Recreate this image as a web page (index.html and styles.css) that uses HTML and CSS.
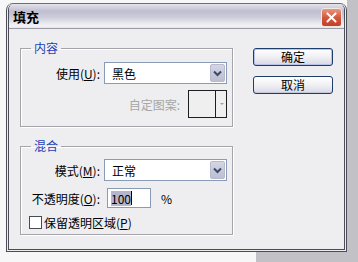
FILE: index.html
```html
<!DOCTYPE html>
<html lang="zh-CN">

<head>
    <meta charset="UTF-8">
    <title>填充</title>
    <link rel="stylesheet" href="styles.css">
</head>

<body>
    <div class="dialog">
        <div class="titlebar">
            <span class="title">填充</span>
            <span class="close">
                <svg width="21" height="19" viewBox="0 0 21 19">
                    <path d="M6 5 L15 14 M15 5 L6 14" stroke="#fff" stroke-width="2.2" stroke-linecap="round" />
                </svg>
            </span>
        </div>

        <div class="client">
            <div class="groups">
                <!-- 内容 -->
                <fieldset class="group">
                    <legend>内容</legend>
                    <div class="row">
                        <span class="lbl">使用(<u>U</u>):</span>
                        <div class="combo">
                            <span class="combo-text">黑色</span>
                            <span class="combo-btn">
                                <svg width="9" height="7" viewBox="0 0 9 7">
                                    <path d="M1 1.5 L4.5 5 L8 1.5" fill="none" stroke="#3a4a6a" stroke-width="2" />
                                </svg>
                            </span>
                        </div>
                    </div>
                    <div class="row row-pattern">
                        <span class="lbl-off">自定图案:</span>
                        <div class="pattern">
                            <span class="pattern-swatch"></span>
                            <span class="pattern-btn"></span>
                        </div>
                    </div>
                </fieldset>

                <!-- 混合 -->
                <fieldset class="group group-blend">
                    <legend>混合</legend>
                    <div class="row">
                        <span class="lbl">模式(<u>M</u>):</span>
                        <div class="combo">
                            <span class="combo-text">正常</span>
                            <span class="combo-btn">
                                <svg width="9" height="7" viewBox="0 0 9 7">
                                    <path d="M1 1.5 L4.5 5 L8 1.5" fill="none" stroke="#3a4a6a" stroke-width="2" />
                                </svg>
                            </span>
                        </div>
                    </div>
                    <div class="row row-opacity">
                        <span class="lbl">不透明度(<u>O</u>):</span>
                        <div class="textbox"><span class="sel">100</span><span class="caret"></span></div>
                        <span class="unit">%</span>
                    </div>
                    <div class="row row-check">
                        <span class="check"></span>
                        <span>保留透明区域(<u>P</u>)</span>
                    </div>
                </fieldset>
            </div>

            <div class="buttons">
                <button class="btn btn-default">确定</button>
                <button class="btn">取消</button>
            </div>
        </div>
    </div>
</body>

</html>
```

FILE: styles.css
```css
html,
body {
    margin: 0;
    height: 100%;
}

body {
    width: 358px;
    height: 262px;
    font-family: "Noto Sans CJK SC", "Liberation Sans", sans-serif;
    font-size: 12px;
    color: #000;
    /* fondo blanco con la franja gris de la captura */
    background:
        linear-gradient(#c2c2c6, #c2c2c6) right 0 top 0 / 11px 100% no-repeat,
        linear-gradient(#c2c2c6, #c2c2c6) right 0 bottom 0 / 102px 10px no-repeat,
        #f7f7f7;
    padding-top: 3px;
    padding-left: 6px;
    box-sizing: border-box;
}

.dialog {
    width: 341px;
    height: 249px;
    box-sizing: border-box;
    border: 3px double #4c4c58;
    border-top: 1px solid #6c6c7a;
    border-radius: 7px 7px 0 0;
    background: #eeeef0;
    display: flex;
    flex-direction: column;
    overflow: hidden;
}

.titlebar {
    height: 24px;
    flex: none;
    display: flex;
    align-items: flex-start;
    justify-content: space-between;
    padding: 0 2px 0 4px;
    background: linear-gradient(#e4e4ec 0%, #bebed0 30%, #cdcdda 55%, #f4f4f7 92%, #e2e2e8 100%);
    border-bottom: 1px solid #9a9aa8;
}

.title {
    font-weight: bold;
    font-size: 13px;
    line-height: 13px;
    margin-top: 6px;
}

.close {
    width: 21px;
    height: 19px;
    margin-top: 4px;
    border-radius: 3px;
    border: 1px solid #f4e8e4;
    box-sizing: border-box;
    background: linear-gradient(#e9977f, #d0543a 55%, #c0402a);
    display: flex;
    align-items: center;
    justify-content: center;
}

.close svg {
    display: block;
}

.client {
    flex: 1;
    display: flex;
    padding: 13px 0 0 11px;
    gap: 20px;
}

.groups {
    width: 213px;
    display: flex;
    flex-direction: column;
}

.group {
    margin: 0;
    padding: 8px 5px 8px 0;
    border: 1px solid #a4a4aa;
    box-shadow: inset 1px 1px 0 #fff, 1px 1px 0 #fff;
    min-width: 0;
}

.group legend {
    color: #1a3fb8;
    font-size: 12px;
    line-height: 12px;
    padding: 0 3px;
    margin-left: 10px;
}

.group-blend {
    margin-top: 13px;
    padding-top: 7px;
    padding-bottom: 4px;
}

.row {
    display: flex;
    align-items: center;
    gap: 4px;
    height: 22px;
}

.row+.row {
    margin-top: 6px;
}

.lbl {
    width: 79px;
    text-align: right;
    white-space: nowrap;
}

.lbl-off {
    color: #a6a6a6;
}

.combo {
    flex: 1;
    height: 22px;
    box-sizing: border-box;
    border: 1px solid #8a9bb8;
    background: #fff;
    display: flex;
    align-items: center;
    justify-content: space-between;
    padding: 1px;
}

.combo-text {
    padding-left: 6px;
}

.combo-btn {
    width: 15px;
    height: 18px;
    box-sizing: border-box;
    border: 1px solid #b7b9cc;
    border-radius: 2px;
    background: linear-gradient(#d4d6e4, #bcbed2);
    display: flex;
    align-items: center;
    justify-content: center;
}

.row-pattern {
    height: 28px;
    justify-content: flex-end;
    gap: 8px;
}

.pattern {
    width: 39px;
    height: 28px;
    box-sizing: border-box;
    border: 1px solid #1e1e1e;
    display: flex;
    background: #efefef;
}

.pattern-swatch {
    width: 26px;
    border-right: 1px solid #1e1e1e;
}

.pattern-btn {
    flex: 1;
    position: relative;
}

.pattern-btn::after {
    content: "";
    position: absolute;
    left: 4px;
    top: 12px;
    border: 2px solid transparent;
    border-top: 2px solid #a0a0a0;
}

.row-opacity {
    height: 20px;
    margin-top: 7px !important;
}

.textbox {
    width: 44px;
    height: 20px;
    box-sizing: border-box;
    border: 1px solid #8a9bb8;
    background: #fff;
    margin-left: 3px;
    display: flex;
    align-items: center;
    padding-left: 3px;
}

.sel {
    background: #b3b6cc;
    line-height: 15px;
}

.caret {
    width: 1px;
    height: 14px;
    background: #000;
}

.unit {
    margin-left: 6px;
}

.row-check {
    height: 16px;
    gap: 2px;
}

.check {
    width: 13px;
    height: 13px;
    box-sizing: border-box;
    border: 1px solid #4a4a55;
    background: #fff;
    margin-left: 8px;
}

.buttons {
    display: flex;
    flex-direction: column;
    gap: 10px;
    padding-top: 6px;
}

.btn {
    width: 80px;
    height: 18px;
    padding: 0;
    font-family: inherit;
    font-size: 12px;
    line-height: 14px;
    color: #000;
    border: 1px solid #1e3c6c;
    border-radius: 3px;
    background: linear-gradient(#ffffff, #f2f2f6 45%, #d8d9e6);
    box-shadow: inset 0 -1px 0 #c4c6da;
}

.btn-default {
    box-shadow: inset 0 0 0 1px #b6c4ec;
}
```
